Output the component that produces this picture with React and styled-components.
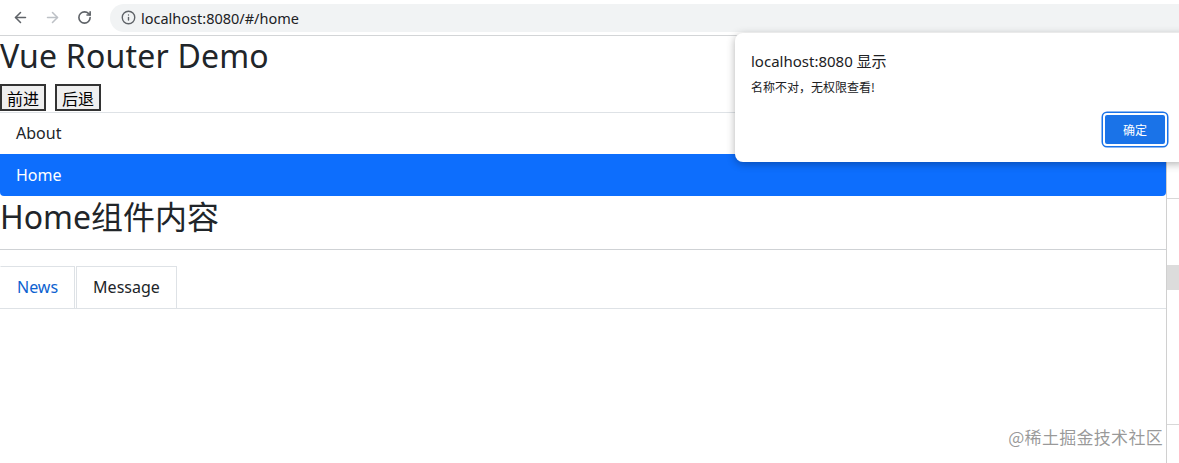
import React from 'react';
import styled, { createGlobalStyle } from 'styled-components';
import { ArrowLeft, ArrowRight, RotateCw, Info } from 'lucide-react';

const GlobalStyle = createGlobalStyle`
  html, body {
    margin: 0;
    padding: 0;
    background: #fff;
  }
  body {
    font-family: "Noto Sans", "Noto Sans CJK SC", sans-serif;
    color: #212529;
  }
`;

const Page = styled.div`
  position: relative;
  width: 1179px;
  height: 463px;
  overflow: hidden;
  background: #fff;
`;

const Chrome = styled.div`
  display: flex;
  align-items: center;
  height: 36px;
  border-bottom: 1px solid #d3d5d7;
  box-sizing: border-box;
  padding-left: 11px;
  background: #fff;
`;

const NavIcon = styled.span`
  display: flex;
  align-items: center;
  justify-content: center;
  width: 18px;
  height: 18px;
  margin-right: 14px;
  color: ${(p) => (p.$disabled ? '#bdc1c6' : '#5f6368')};
`;

const UrlBar = styled.div`
  flex: 1;
  display: flex;
  align-items: center;
  height: 28px;
  margin-left: 3px;
  border-radius: 14px 0 0 14px;
  background: #f1f3f4;
  padding-left: 11px;
  color: #202124;
  font-family: "Noto Sans", sans-serif;
  font-size: 14.5px;
  gap: 5px;
`;

const Body = styled.div`
  display: flex;
  height: calc(463px - 36px);
`;

const Main = styled.div`
  flex: 1;
  min-width: 0;
`;

const Side = styled.div`
  width: 12px;
  border-left: 1px solid #d0d0d0;
  display: flex;
  flex-direction: column;
`;

const SideBlock = styled.div`
  height: ${(p) => p.$h}px;
  border-bottom: ${(p) => (p.$line ? '1px solid #d8d8d8' : 'none')};
  background: ${(p) => p.$bg || 'transparent'};
`;

const Title = styled.h1`
  margin: 0;
  font-size: 32px;
  font-weight: 400;
  line-height: 40px;
  letter-spacing: 0.2px;
`;

const ButtonRow = styled.div`
  display: flex;
  gap: 9px;
  margin-top: 8px;
`;

const PlainButton = styled.button`
  font-family: "Noto Sans CJK SC", sans-serif;
  font-size: 16px;
  line-height: 20px;
  padding: 1px 5px;
  height: 27px;
  background: #efefef;
  border: 2px solid #333;
  border-radius: 0;
  color: #000;
`;

const ListGroup = styled.div`
  margin-top: 1px;
  border-top: 1px solid #dee2e6;
  display: flex;
  flex-direction: column;
`;

const ListItem = styled.div`
  padding: 8px 16px;
  font-size: 16px;
  line-height: 24px;
  height: 41px;
  box-sizing: border-box;
  color: ${(p) => (p.$active ? '#fff' : '#212529')};
  background: ${(p) => (p.$active ? '#0d6efd' : '#fff')};
  border-radius: ${(p) => (p.$active ? '0 0 4px 4px' : '0')};
  border-right: ${(p) => (p.$active ? 'none' : '1px solid #dee2e6')};
  ${(p) => p.$active && 'height: 42px; padding-top: 9px;'}
`;

const Heading = styled.h2`
  margin: 0;
  font-size: 32px;
  font-weight: 400;
  line-height: 42px;
`;

const Rule = styled.hr`
  margin: 11px 0 0;
  border: 0;
  border-top: 1px solid #cfd2d5;
`;

const Tabs = styled.div`
  display: flex;
  margin-top: 16px;
  border-bottom: 1px solid #dee2e6;
`;

const Tab = styled.div`
  padding: 8px 16px;
  font-size: 16px;
  line-height: 24px;
  height: 42px;
  box-sizing: border-box;
  border: 1px solid #dee2e6;
  border-bottom: none;
  margin-right: 1px;
  color: ${(p) => (p.$link ? '#0d62d0' : '#212529')};
  ${(p) => p.$first && 'border-left-color: transparent;'}
`;

const Dialog = styled.div`
  position: absolute;
  left: 735px;
  top: 33px;
  width: 450px;
  height: 129px;
  box-sizing: border-box;
  background: #fff;
  border-radius: 8px 0 0 8px;
  box-shadow: 0 2px 8px rgba(0, 0, 0, 0.3);
  padding: 18px 0 0 16px;
  display: flex;
  flex-direction: column;
`;

const DialogTitle = styled.div`
  font-size: 15px;
  line-height: 20px;
  color: #202124;
  font-family: "Noto Sans", "Noto Sans CJK SC", sans-serif;
`;

const DialogMessage = styled.div`
  margin-top: 8px;
  font-size: 12px;
  line-height: 16px;
  color: #202124;
  font-family: "Noto Sans CJK SC", sans-serif;
`;

const DialogActions = styled.div`
  display: flex;
  justify-content: flex-start;
  margin-top: 18px;
  padding-left: 352px;
`;

const OkButton = styled.button`
  width: 64px;
  height: 33px;
  border-radius: 4px;
  background: #1a73e8;
  color: #fff;
  font-size: 12px;
  font-family: "Noto Sans CJK SC", sans-serif;
  border: 2px solid #fff;
  box-shadow: 0 0 0 1.5px #1a73e8;
  padding: 0;
`;

const Watermark = styled.div`
  position: absolute;
  right: 16px;
  top: 425px;
  font-size: 17px;
  line-height: 24px;
  color: rgba(120, 120, 120, 0.75);
  font-family: "Noto Sans CJK SC", sans-serif;
  letter-spacing: 0.3px;
`;

const App = () => {
  return (
    <>
      <GlobalStyle />
      <Page>
        <Chrome>
          <NavIcon><ArrowLeft size={17} strokeWidth={2.2} /></NavIcon>
          <NavIcon $disabled><ArrowRight size={17} strokeWidth={2.2} /></NavIcon>
          <NavIcon><RotateCw size={15} strokeWidth={2.6} /></NavIcon>
          <UrlBar>
            <Info size={15} strokeWidth={2.2} color="#5f6368" />
            <span>localhost:8080/#/home</span>
          </UrlBar>
        </Chrome>
        <Body>
          <Main>
            <Title>Vue Router Demo</Title>
            <ButtonRow>
              <PlainButton>前进</PlainButton>
              <PlainButton>后退</PlainButton>
            </ButtonRow>
            <ListGroup>
              <ListItem>About</ListItem>
              <ListItem $active>Home</ListItem>
            </ListGroup>
            <Heading>Home组件内容</Heading>
            <Rule />
            <Tabs>
              <Tab $link $first>News</Tab>
              <Tab>Message</Tab>
            </Tabs>
          </Main>
          <Side>
            <SideBlock $h={162} $line />
            <SideBlock $h={66} />
            <SideBlock $h={25} $bg="#dcdcdc" />
            <SideBlock $h={134} $line />
          </Side>
        </Body>
        <Dialog>
          <DialogTitle>localhost:8080 显示</DialogTitle>
          <DialogMessage>名称不对，无权限查看!</DialogMessage>
          <DialogActions>
            <OkButton>确定</OkButton>
          </DialogActions>
        </Dialog>
        <Watermark>@稀土掘金技术社区</Watermark>
      </Page>
    </>
  );
};

export default App;
